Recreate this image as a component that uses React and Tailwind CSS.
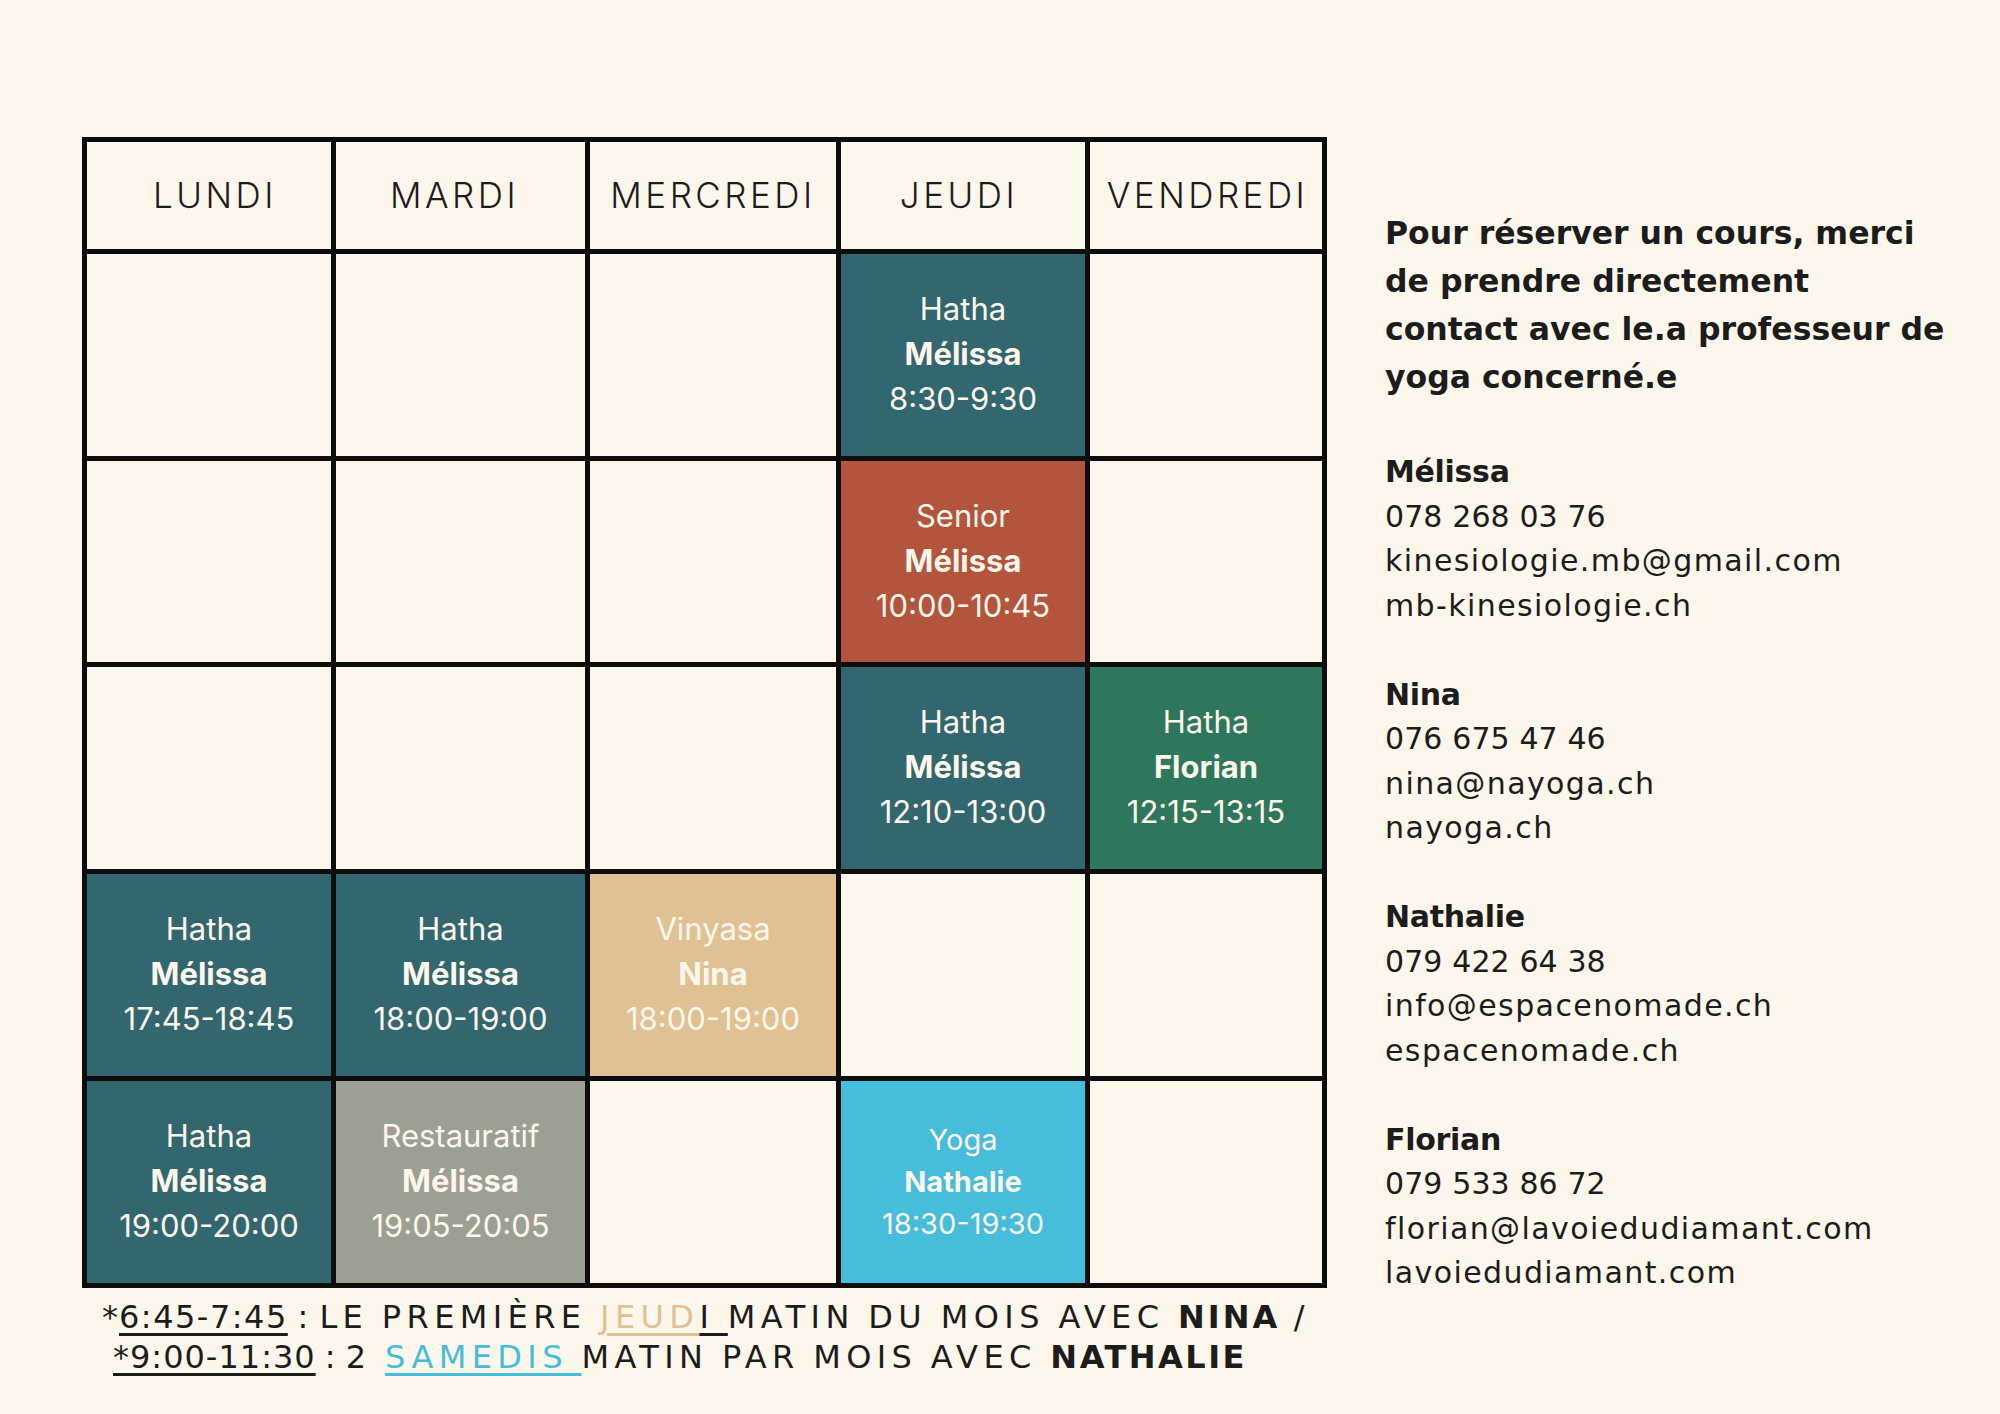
import React from 'react';

const days = [
  { d: 'LUNDI', cls: 'pl-[12px]' },
  { d: 'MARDI', cls: 'pr-[12px]' },
  { d: 'MERCREDI', cls: '' },
  { d: 'JEUDI', cls: 'pr-[8px]' },
  { d: 'VENDREDI', cls: 'pl-[3px]' },
];

// one entry per row, five slots; null = empty cell
const rows = [
  [null, null, null, { c: 'Hatha', p: 'Mélissa', t: '8:30-9:30', bg: 'bg-[#33676f]' }, null],
  [null, null, null, { c: 'Senior', p: 'Mélissa', t: '10:00-10:45', bg: 'bg-[#b3543c]' }, null],
  [
    null,
    null,
    null,
    { c: 'Hatha', p: 'Mélissa', t: '12:10-13:00', bg: 'bg-[#33676f]' },
    { c: 'Hatha', p: 'Florian', t: '12:15-13:15', bg: 'bg-[#2e775c]' },
  ],
  [
    { c: 'Hatha', p: 'Mélissa', t: '17:45-18:45', bg: 'bg-[#33676f]' },
    { c: 'Hatha', p: 'Mélissa', t: '18:00-19:00', bg: 'bg-[#33676f]' },
    { c: 'Vinyasa', p: 'Nina', t: '18:00-19:00', bg: 'bg-[#dfc193]' },
    null,
    null,
  ],
  [
    { c: 'Hatha', p: 'Mélissa', t: '19:00-20:00', bg: 'bg-[#33676f]' },
    { c: 'Restauratif', p: 'Mélissa', t: '19:05-20:05', bg: 'bg-[#9ba092]' },
    null,
    { c: 'Yoga', p: 'Nathalie', t: '18:30-19:30', bg: 'bg-[#46bddb]', small: true },
    null,
  ],
];

const contacts = [
  { name: 'Mélissa', phone: '078 268 03 76', lines: ['kinesiologie.mb@gmail.com', 'mb-kinesiologie.ch'] },
  { name: 'Nina', phone: '076 675 47 46', lines: ['nina@nayoga.ch', 'nayoga.ch'] },
  { name: 'Nathalie', phone: '079 422 64 38', lines: ['info@espacenomade.ch', 'espacenomade.ch'] },
  { name: 'Florian', phone: '079 533 86 72', lines: ['florian@lavoiedudiamant.com', 'lavoiedudiamant.com'] },
];

const uline = 'underline decoration-[3px] underline-offset-[5px]';

function Slot({ item }) {
  if (!item) return <div className="bg-[#fdf6eb]" />;
  return (
    <div
      className={`${item.bg} flex flex-col items-center justify-center text-center text-[#fdf6eb] font-['Inter',sans-serif] ${
        item.small ? 'text-[29px] leading-[42px]' : 'text-[31px] leading-[45px] pb-[3px]'
      }`}
    >
      <span>{item.c}</span>
      <span className="font-bold">{item.p}</span>
      <span>{item.t}</span>
    </div>
  );
}

export default function App() {
  return (
    <div className="w-[2000px] h-[1414px] bg-[#fdf6eb] flex pt-[137px] pl-[82px] text-[#1c1c1c]">
      <div className="flex flex-col w-[1245px] shrink-0">
        <div className="grid grid-cols-[244px_249px_246px_244px_232px] grid-rows-[107px_202px_201px_202px_202px_202px] gap-[5px] p-[5px] bg-[#0d0d0d] w-[1245px]">
          {days.map(({ d, cls }) => (
            <div
              key={d}
              className={`bg-[#fdf6eb] flex items-center justify-center font-['Inter',sans-serif] font-light text-[35px] tracking-[3.5px] text-[#1c1c1c] ${cls}`}
            >
              {d}
            </div>
          ))}
          {rows.map((r, i) => r.map((item, j) => <Slot key={`${i}-${j}`} item={item} />))}
        </div>

        <div className="mt-[9px] whitespace-nowrap font-['DejaVu_Sans',sans-serif] text-[32px] leading-[40px] tracking-[5.4px] [word-spacing:-2px] text-[#1c1c1c]">
          <p className="pl-[20px]">
            <span className="tracking-[1px]">*</span>
            <span className={`${uline} tracking-[1.5px]`}>6:45-7:45</span>
            <span className="tracking-[1.5px]"> : </span>LE PREMIÈRE{' '}
            <span className={`text-[#dfc193] ${uline}`}>JEUD</span>
            <span className={uline}>I </span>MATIN DU MOIS AVEC <span className="font-bold tracking-[3px]">NINA</span> /
          </p>
          <p className="pl-[31px]">
            <span className={`${uline} tracking-[1px]`}>*9:00-11:30</span>
            <span className="tracking-[1px]"> : </span>2{' '}
            <span className={`text-[#46bddb] ${uline}`}>SAMEDIS </span>MATIN PAR MOIS AVEC{' '}
            <span className="font-bold tracking-[2.5px]">NATHALIE</span>
          </p>
        </div>
      </div>

      <div className="ml-[58px] pt-[72px] font-['DejaVu_Sans',sans-serif]">
        <p className="font-bold text-[31.5px] leading-[48px] w-[600px]">
          Pour réserver un cours, merci
          <br />
          de prendre directement
          <br />
          contact avec le.a professeur de
          <br />
          yoga concerné.e
        </p>

        <div className="mt-[49px] flex flex-col gap-[44.5px] text-[30px] leading-[44.5px] tracking-[1.4px]">
          {contacts.map((c) => (
            <div key={c.name}>
              <p className="font-bold tracking-[-0.3px]">{c.name}</p>
              <p className="tracking-[0.1px]">{c.phone}</p>
              {c.lines.map((l) => (
                <p key={l}>{l}</p>
              ))}
            </div>
          ))}
        </div>
      </div>
    </div>
  );
}
